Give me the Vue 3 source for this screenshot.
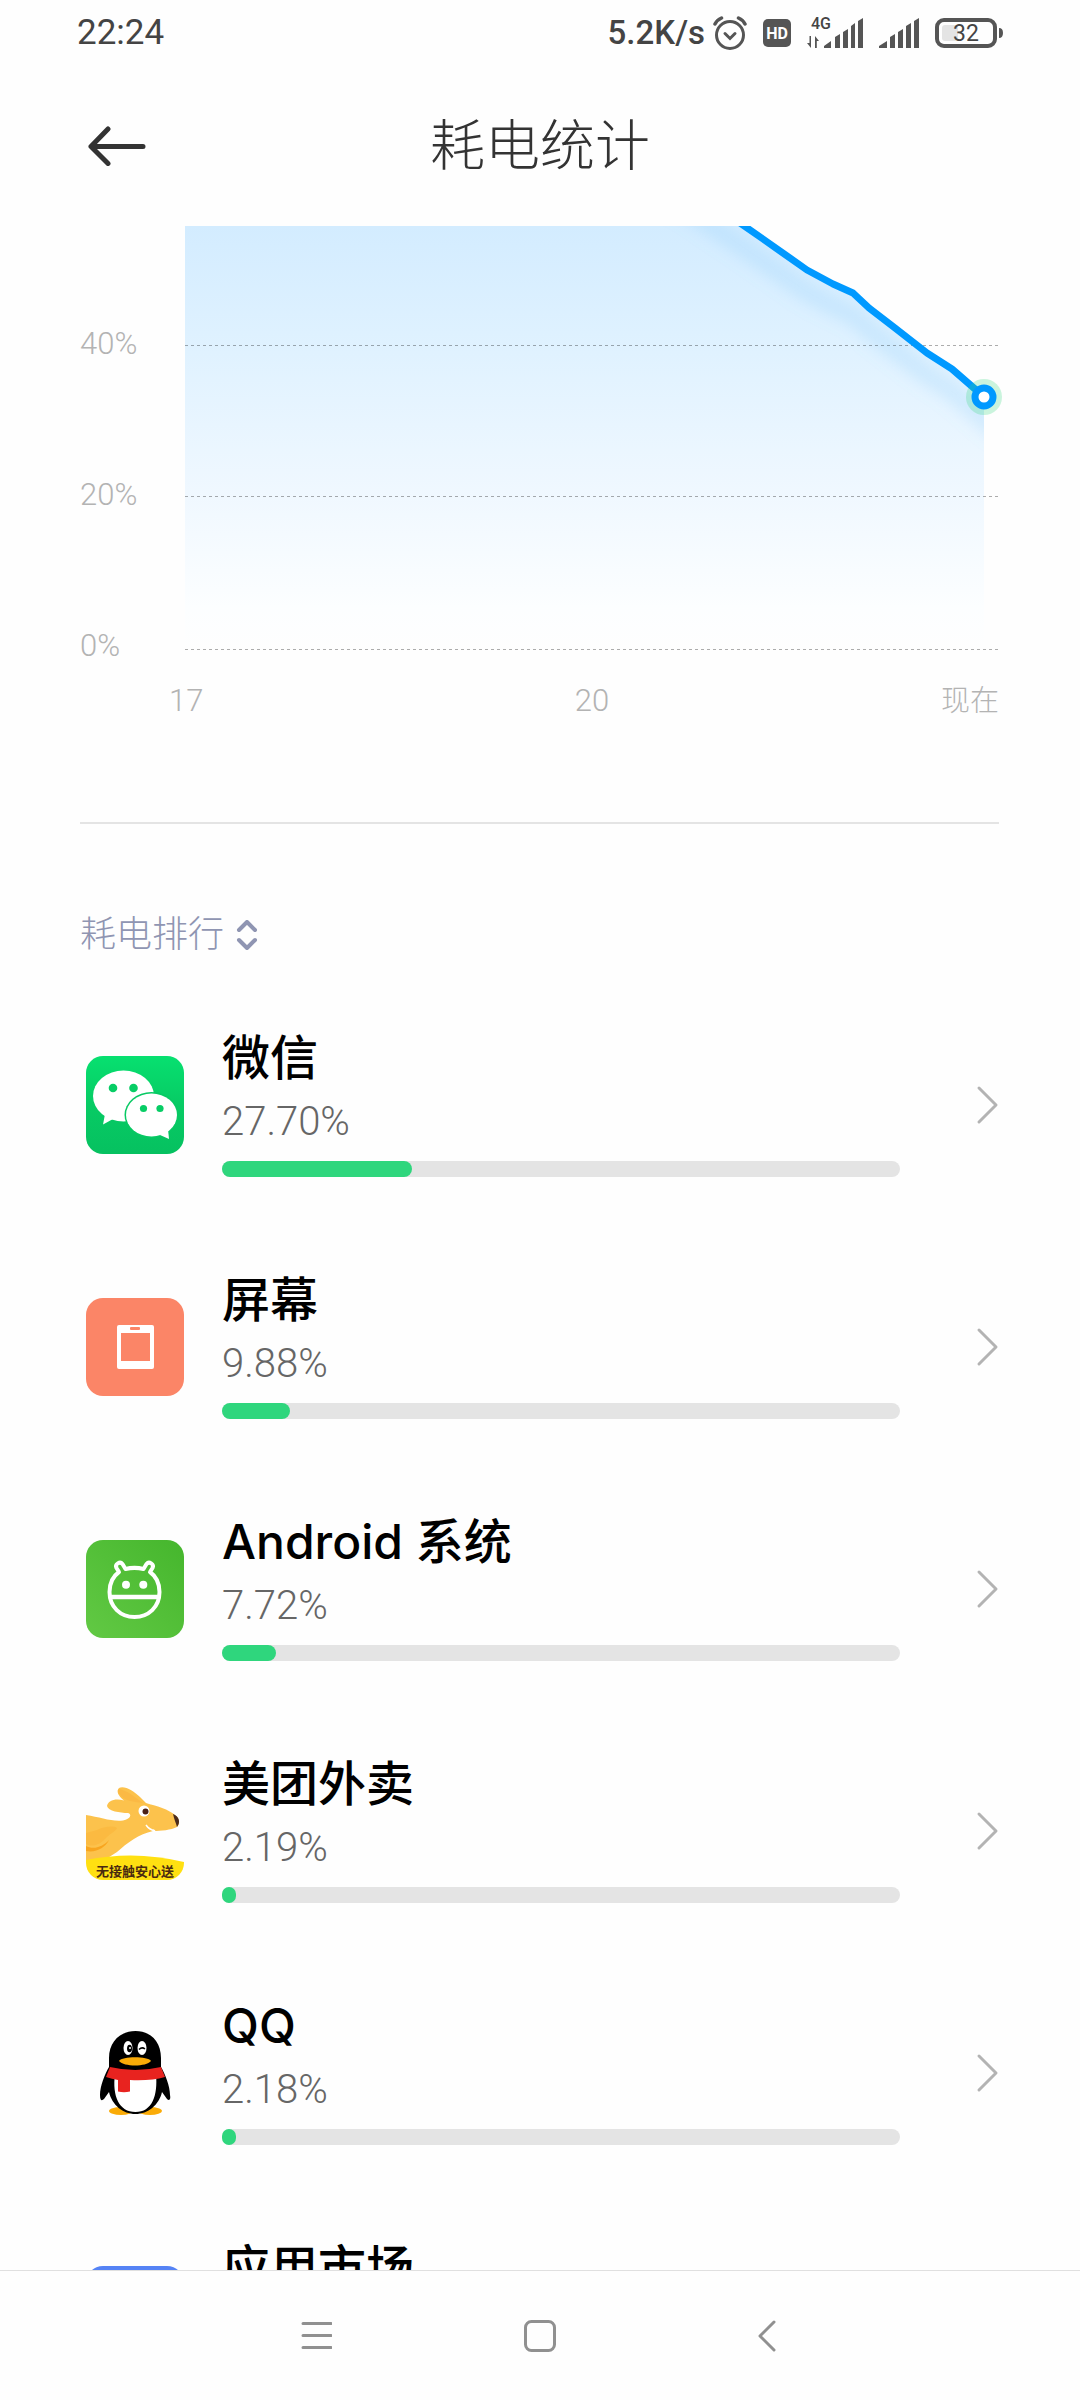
<template>
  <div class="screen">
    <header class="status-bar">
      <span class="clock">22:24</span>
      <div class="status-icons">
        <div class="network">
          <span class="speed">5.2K/s</span>
          <svg width="34" height="36" viewBox="0 0 34 36" fill="none" stroke="#555" stroke-width="3" stroke-linecap="round">
            <circle cx="17" cy="20" r="13.5" />
            <path d="M12 18.5l5 5 5-5" />
            <path d="M2 9Q4 5 8.5 3M32 9Q30 5 25.5 3" stroke-width="3.5" />
          </svg>
        </div>
        <svg width="28" height="28" viewBox="0 0 28 28">
          <rect width="28" height="28" rx="5" fill="#555" />
          <text class="hd" x="14" y="20" text-anchor="middle">HD</text>
        </svg>
        <svg width="56" height="36" viewBox="0 0 56 36" fill="#555">
          <text class="net-type" x="4" y="14">4G</text>
          <path d="M4 21v12L0 28h2.5v-7zM8 33V21l4 5H9.8v7z" />
          <path d="M17 33v-2l7-5v7zM28 33V22l5-3v14zM36 33V17l5-3v19zM44 33V11l4-3v25zM51 33V6l5-3v30z" />
        </svg>
        <svg width="40" height="36" viewBox="0 0 40 36" fill="#555">
          <path d="M0 33v-2l8-5v7zM11 33V22l5-3v14zM19 33V17l5-3v19zM27 33V11l5-3v25zM35 33V6l5-3v30z" />
        </svg>
        <svg width="68" height="30" viewBox="0 0 68 30">
          <rect x="2" y="2" width="58" height="26" rx="7" fill="none" stroke="#555" stroke-width="4" />
          <rect x="7" y="7" width="16" height="16" rx="3" fill="#e4e4e4" />
          <path d="M64 10q4 0 4 5t-4 5z" fill="#555" />
          <text class="battery" x="31" y="23" text-anchor="middle">32</text>
        </svg>
      </div>
    </header>

    <div class="title-bar">
      <button class="back" aria-label="返回">
        <svg width="58" height="40" viewBox="0 0 58 40" fill="none" stroke="#333" stroke-width="5" stroke-linecap="round" stroke-linejoin="round">
          <path d="M20 3L3 20.5l17 17M4 20.5h51" />
        </svg>
      </button>
      <h1>耗电统计</h1>
    </div>

    <main class="content">
      <section class="chart">
        <div class="y-axis">
          <span v-for="label in yLabels" :key="label">{{ label }}</span>
        </div>
        <svg class="plot" viewBox="0 0 814 424">
          <defs>
            <linearGradient id="fade" x1="0" y1="0" x2="0" y2="424" gradientUnits="userSpaceOnUse">
              <stop offset="0" stop-color="#d3ecff" />
              <stop offset="0.3" stop-color="#e0f2ff" />
              <stop offset="0.64" stop-color="#f0f8ff" />
              <stop offset="0.9" stop-color="#fcfeff" />
              <stop offset="1" stop-color="#fefefe" />
            </linearGradient>
            <clipPath id="under">
              <path :d="areaPath" />
            </clipPath>
            <filter id="soft" x="-20%" y="-20%" width="140%" height="150%">
              <feGaussianBlur stdDeviation="8" />
            </filter>
          </defs>
          <path :d="areaPath" fill="url(#fade)" />
          <g clip-path="url(#under)">
            <path :d="shadowPath" class="shadow" filter="url(#soft)" />
          </g>
          <path class="grid-line" d="M0 119.5H814M0 270.5H814M0 423.5H814" />
          <path :d="linePath" class="line" />
          <circle cx="799" cy="171" r="18" fill="#2fd67a" fill-opacity="0.25" />
          <circle cx="799" cy="171" r="9" fill="#fff" stroke="#0099ff" stroke-width="7" />
        </svg>
        <div class="x-axis">
          <span class="first">17</span>
          <span>20</span>
          <span class="last">现在</span>
        </div>
      </section>

      <section class="ranking">
        <button class="sort">
          耗电排行
          <svg width="22" height="30" viewBox="0 0 22 30" fill="none" stroke="#8f95b2" stroke-width="4" stroke-linecap="round" stroke-linejoin="round">
            <path d="M3 10l8-8 8 8M3 20l8 8 8-8" />
          </svg>
        </button>

        <ul class="apps">
          <li v-for="app in apps" :key="app.icon">
            <button class="app">
              <svg class="app-icon" viewBox="0 0 98 98">
                <g v-if="app.icon === 'wechat'">
                  <linearGradient id="wechat-bg" x1="0" y1="0" x2="0" y2="1">
                    <stop offset="0" stop-color="#07e070" />
                    <stop offset="0.5" stop-color="#07cb64" />
                    <stop offset="1" stop-color="#06c160" />
                  </linearGradient>
                  <rect width="98" height="98" rx="17" fill="url(#wechat-bg)" />
                  <g fill="#fff">
                    <ellipse cx="37.5" cy="40" rx="30.5" ry="25.5" />
                    <path d="M19 58l-2 10.5L27 63z" />
                  </g>
                  <ellipse cx="65.5" cy="59" rx="27" ry="23" fill="#07c963" />
                  <g fill="#fff">
                    <ellipse cx="65.5" cy="59" rx="25.5" ry="21.5" />
                    <path d="M74 79l9 4-1-10z" />
                  </g>
                  <g fill="#07cd65">
                    <circle cx="27" cy="32" r="4.3" />
                    <circle cx="47.5" cy="32" r="4.3" />
                    <circle cx="57.5" cy="52.5" r="3.6" />
                    <circle cx="74" cy="52.5" r="3.6" />
                  </g>
                </g>

                <g v-else-if="app.icon === 'screen'">
                  <rect width="98" height="98" rx="17" fill="#fb8567" />
                  <rect x="31" y="27" width="37" height="44" rx="2" fill="#fff" />
                  <rect x="35" y="35" width="29" height="28" fill="#fb8567" />
                  <rect x="44" y="29" width="10" height="3" rx="1" fill="#fb8567" />
                </g>

                <g v-else-if="app.icon === 'android'">
                  <linearGradient id="android-bg" x1="1" y1="0" x2="0" y2="1">
                    <stop offset="0" stop-color="#45b62d" />
                    <stop offset="1" stop-color="#62c944" />
                  </linearGradient>
                  <rect width="98" height="98" rx="17" fill="url(#android-bg)" />
                  <path
                    d="M33 32C26 37 23.5 45 23.5 52c0 15 11 25 25 25s25-10 25-25c0-7-2.5-15-9.500-20l2.500-4c2-4-3.500-7-6-4l-3 5c-6-1.500-12-1.500-18 0l-3-5c-2.500-3-8 0-6 4z"
                    fill="none"
                    stroke="#fff"
                    stroke-width="4"
                    stroke-linejoin="round"
                  />
                  <path d="M25 57h47" stroke="#fff" stroke-width="4.5" />
                  <circle cx="40" cy="44.7" r="4" fill="#fff" />
                  <circle cx="57.3" cy="44.7" r="4" fill="#fff" />
                </g>

                <g v-else-if="app.icon === 'meituan'">
                  <clipPath id="meituan-clip"><rect width="98" height="98" rx="17" /></clipPath>
                  <g clip-path="url(#meituan-clip)">
                    <path
                      fill="#fcc24c"
                      d="M0 33C14 35 26 40 37 38.5 45 37 46 32 42 31 34 31 22 29 21 24 22 18 30 16 38 18.5 32 14 30 9 33 6 38 3 48 9 54 15l6 6C70 24 83 27 90 34c4 3 4 9 1 11-6 3-16 4-24 4-14 3-26 12-36 21L17 79H0z"
                    />
                    <path d="M33 7c8 1 17 9 24 14-9-1-18-2-23-8-2-2-3-4-1-6z" fill="#fbb944" />
                    <path d="M0 62c7 4 15 0 20-6 5-5 11-8 11-10-4-3-14-1-20 2L0 51z" fill="#fbba41" />
                    <path d="M0 64c7 4 17 1 23-6-4 8-13 13-23 11z" fill="#f8a51f" />
                    <path d="M60 43c2 3 5 5 9 6l-2-1" fill="none" stroke="#fff" stroke-width="1.5" />
                    <circle cx="58" cy="29" r="5.5" fill="#fff" />
                    <circle cx="59.5" cy="29.5" r="3" fill="#4a2016" />
                    <path d="M87 32c6 2 8 8 4 13-1-4-3-8-4-13z" fill="#4a2a1c" />
                    <path d="M0 78q49-10 98 2v18H0z" fill="#ffe011" />
                    <text class="slogan" x="49" y="94" text-anchor="middle">无接触安心送</text>
                  </g>
                </g>

                <g v-else-if="app.icon === 'qq'">
                  <g fill="#faab07">
                    <ellipse cx="35" cy="87" rx="12" ry="4" />
                    <ellipse cx="64" cy="87" rx="12" ry="4" />
                  </g>
                  <path
                    d="M49.5 7C34 7 23 18 23 34v9c-4 7-9 19-9 28 0 6 2 6 4 4l5-7c3 13 14 22 26.5 22S73 81 76 68l5 7c2 2 4 1 3-4 0-9-5-21-9-28v-9C75 18 65 7 49.5 7z"
                    fill="#000"
                  />
                  <path d="M29 50q20 8 41 0c2 22-4 38-20.5 38S26 72 29 50z" fill="#fff" />
                  <path d="M24 43q25 6 51 0l4 10q-14 4-35 3v11.5q-6 1.5-12 0V56q-6-1-12-3z" fill="#e8231f" />
                  <ellipse cx="42" cy="24" rx="4.5" ry="7" fill="#fff" />
                  <ellipse cx="56" cy="24" rx="4.5" ry="7" fill="#fff" />
                  <ellipse cx="43.5" cy="24.5" rx="2.5" ry="3.8" fill="#000" />
                  <circle cx="44" cy="24" r="1" fill="#fff" />
                  <path d="M53 25.5q3-3 6-.5" fill="none" stroke="#000" stroke-width="1.5" />
                  <path d="M33 37c3-5 29-5 32 0-5 6-27 6-32 0z" fill="#faab07" />
                </g>

                <rect v-else width="98" height="98" rx="17" fill="#5583f5" />
              </svg>

              <span class="info">
                <span class="name">{{ app.name }}</span>
                <span class="percent">{{ app.percent }}</span>
                <span class="track">
                  <span class="fill" :style="{ width: barWidth(app.percent) }"></span>
                </span>
              </span>

              <svg width="24" height="40" viewBox="0 0 24 40" fill="none" stroke="#b3b3b3" stroke-width="3" stroke-linecap="round" stroke-linejoin="round">
                <path d="M3 3l17 17L3 37" />
              </svg>
            </button>
          </li>
        </ul>
      </section>
    </main>

    <nav class="nav-bar">
      <button aria-label="菜单">
        <svg width="32" height="32" viewBox="0 0 32 32" fill="none" stroke="#909090" stroke-width="3" stroke-linecap="round">
          <path d="M3 3.5h28M3 15.5h28M3 27.5h28" />
        </svg>
      </button>
      <button aria-label="主屏幕">
        <svg width="32" height="32" viewBox="0 0 32 32" fill="none" stroke="#909090" stroke-width="3">
          <rect x="1.5" y="1.5" width="29" height="29" rx="6" />
        </svg>
      </button>
      <button aria-label="返回">
        <svg width="32" height="32" viewBox="0 0 32 32" fill="none" stroke="#909090" stroke-width="3" stroke-linecap="round" stroke-linejoin="round">
          <path d="M26 2L12 16l14 14" />
        </svg>
      </button>
    </nav>
  </div>
</template>

<script setup>
import { ref, computed } from 'vue'

const yLabels = ['40%', '20%', '0%']

// battery level, in plot units
const points = [
  [0, -300],
  [500, -40],
  [555, -3],
  [578, 13],
  [622, 44],
  [648, 58],
  [668, 67],
  [684, 82],
  [710, 102],
  [742, 127],
  [767, 143],
  [790, 163],
  [799, 171]
]

const toPath = (list) => 'M' + list.map((p) => p.join(' ')).join('L')

const linePath = computed(() => toPath(points))
const areaPath = computed(() => `${linePath.value}V424H0Z`)
const shadowPath = computed(() => toPath(points.map(([x, y]) => [x, y + 22])) + 'l20 16')

const apps = ref([
  { icon: 'wechat', name: '微信', percent: '27.70%' },
  { icon: 'screen', name: '屏幕', percent: '9.88%' },
  { icon: 'android', name: 'Android 系统', percent: '7.72%' },
  { icon: 'meituan', name: '美团外卖', percent: '2.19%' },
  { icon: 'qq', name: 'QQ', percent: '2.18%' },
  { icon: 'market', name: '应用市场', percent: '' }
])

const barWidth = (percent) => `${Math.round(parseFloat(percent) || 0)}%`
</script>

<style>
body {
  background: #fefefe;
}
</style>

<style scoped>
.screen {
  display: flex;
  flex-direction: column;
  height: 100vh;
  overflow: hidden;
  font-family: Roboto, 'Noto Sans CJK SC', sans-serif;
  color: #333;
}

button {
  padding: 0;
  border: none;
  background: none;
  color: inherit;
  font: inherit;
  text-align: left;
}

svg {
  display: block;
  flex: none;
}

.status-bar {
  display: flex;
  align-items: center;
  justify-content: space-between;
  height: 66px;
  padding: 0 77px;
  color: #444;
}

.clock {
  font-size: 35px;
  line-height: 40px;
}

.status-icons {
  display: flex;
  align-items: center;
  gap: 16px;
}

.network {
  display: flex;
  align-items: center;
  gap: 8px;
}

.speed {
  font-size: 33px;
  font-weight: 500;
  line-height: 40px;
}

.hd {
  fill: #fff;
  font-size: 16px;
  font-weight: 700;
}

.net-type {
  fill: #444;
  font-size: 16px;
  font-weight: 500;
}

.battery {
  fill: #444;
  font-size: 23px;
}

.title-bar {
  display: grid;
  grid-template-columns: 1fr auto 1fr;
  align-items: center;
  height: 160px;
  padding: 0 88px;
}

h1 {
  margin: 0;
  font-size: 55px;
  font-weight: 300;
  line-height: 80px;
}

.content {
  flex: 1;
  min-height: 0;
  overflow: hidden;
}

.chart {
  display: grid;
  grid-template-columns: 105px 1fr;
  margin: 0 81px 0 80px;
  padding-bottom: 101px;
  border-bottom: 2px solid #e4e4e4;
  color: #b3b3b3;
  font-size: 31px;
  font-weight: 300;
}

.y-axis {
  display: flex;
  flex-direction: column;
  gap: 121px;
  padding-top: 103px;
  line-height: 30px;
}

.plot {
  width: 100%;
  overflow: visible;
}

.line {
  fill: none;
  stroke: #0099ff;
  stroke-width: 7;
  stroke-linejoin: round;
}

.shadow {
  fill: none;
  stroke: #7cc4f5;
  stroke-opacity: 0.24;
  stroke-width: 18;
}

.grid-line {
  fill: none;
  stroke: #000;
  stroke-opacity: 0.32;
  stroke-dasharray: 3 3;
}

.x-axis {
  display: grid;
  grid-column: 2;
  grid-template-columns: 1fr auto 1fr;
  margin-top: 20px;
  line-height: 40px;
}

.first {
  margin-left: -16px;
}

.last {
  font-size: 29px;
  text-align: right;
}

.sort {
  display: flex;
  align-items: center;
  gap: 12px;
  margin: 85px 80px 23px;
  color: #8f95b2;
  font-size: 36px;
  font-weight: 300;
  line-height: 52px;
}

.apps {
  margin: 0;
  padding: 0;
  list-style: none;
}

.app {
  display: flex;
  align-items: center;
  width: 100%;
  height: 242px;
  padding: 0 80px 0 86px;
}

.app-icon {
  width: 98px;
  height: 98px;
}

.slogan {
  fill: #4a2a10;
  font-size: 13px;
  font-weight: 700;
}

.info {
  display: flex;
  flex: 1;
  flex-direction: column;
  gap: 16px;
  margin: 0 76px 0 38px;
}

.name {
  height: 48px;
  color: #000;
  font-family: Inter, 'Noto Sans CJK SC', sans-serif;
  font-size: 48px;
  font-weight: 500;
  line-height: 50px;
}

.percent {
  height: 48px;
  color: #666;
  font-size: 40px;
  font-weight: 300;
  line-height: 50px;
}

.track {
  height: 16px;
  border-radius: 8px;
  background: #e4e4e4;
}

.fill {
  display: block;
  height: 100%;
  border-radius: 8px;
  background: #2fd67d;
}

.nav-bar {
  display: flex;
  justify-content: center;
  height: 129px;
  border-top: 1px solid #e0e0e0;
}

.nav-bar button {
  display: flex;
  align-items: center;
  justify-content: center;
  width: 224px;
}
</style>
